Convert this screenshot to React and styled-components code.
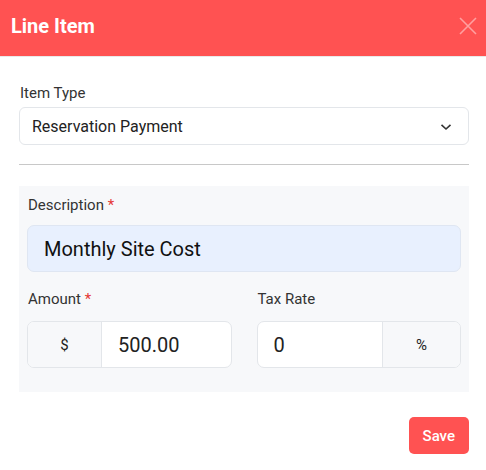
import React from "react";
import styled, { createGlobalStyle } from "styled-components";

const GlobalStyle = createGlobalStyle`
  * { box-sizing: border-box; }
  body {
    margin: 0;
    background: #fff;
    font-family: Roboto, "Liberation Sans", Arial, sans-serif;
    color: #212529;
  }
`;

export default function App() {
  return (
    <>
      <GlobalStyle />
      <Modal>
        <Header>
          <h2>Line Item</h2>
          <CloseButton aria-label="close">
            <svg width="18" height="18" viewBox="0 0 18 18">
              <path d="M1 1L17 17M17 1L1 17" stroke="currentColor" strokeWidth="1.6" />
            </svg>
          </CloseButton>
        </Header>
        <Body>
          <Field>
            <Label>Item Type</Label>
            <Select>
              <span>Reservation Payment</span>
              <svg width="12" height="8" viewBox="0 0 12 8">
                <path d="M1.5 1.8L6 6L10.5 1.8" fill="none" stroke="#333" strokeWidth="1.6" />
              </svg>
            </Select>
          </Field>
          <Divider />
          <Panel>
            <Field>
              <Label $gap={11}>
                Description <Req>*</Req>
              </Label>
              <BigInput $autofill>Monthly Site Cost</BigInput>
            </Field>
            <Row>
              <Field>
                <Label $gap={13}>
                  Amount <Req>*</Req>
                </Label>
                <Group>
                  <Addon $side="left" $w={74}>$</Addon>
                  <GroupInput>500.00</GroupInput>
                </Group>
              </Field>
              <Field>
                <Label $gap={13}>Tax Rate</Label>
                <Group>
                  <GroupInput>0</GroupInput>
                  <Addon $side="right" $w={78}>%</Addon>
                </Group>
              </Field>
            </Row>
          </Panel>
          <Footer>
            <SaveButton>Save</SaveButton>
          </Footer>
        </Body>
      </Modal>
    </>
  );
}

const Modal = styled.div`
  width: 486px;
  height: 470px;
  background: #fff;
`;

const Header = styled.div`
  height: 57px;
  background: #ff5252;
  display: flex;
  align-items: center;
  justify-content: space-between;
  padding: 0 9px 0 11px;
  border-bottom: 1px solid #e9e9e9;
  h2 {
    margin: 0;
    color: #fff;
    font-size: 20px;
    font-weight: 700;
    padding-bottom: 4px;
  }
`;

const CloseButton = styled.button`
  background: none;
  border: none;
  padding: 0;
  color: rgba(255, 255, 255, 0.45);
  display: flex;
  margin-bottom: 4px;
`;

const Body = styled.div`
  padding: 27px 17px 0 19px;
`;

const Field = styled.div`
  display: flex;
  flex-direction: column;
  flex: 1;
`;

const Label = styled.label`
  font-size: 15px;
  color: #333;
  line-height: 18px;
  margin-bottom: ${(p) => p.$gap || 5}px;
  margin-left: 1px;
`;

const Req = styled.span`
  color: #e53935;
`;

const Select = styled.div`
  height: 38px;
  border: 1px solid #e3e6ea;
  border-radius: 6px;
  display: flex;
  align-items: center;
  justify-content: space-between;
  padding: 0 16px 0 12px;
  font-size: 16px;
  color: #222;
  svg {
    margin-top: 1px;
  }
`;

const Divider = styled.hr`
  border: none;
  border-top: 1px solid #c8c8c8;
  margin: 19px 0 21px;
`;

const Panel = styled.div`
  background: #f7f8fa;
  padding: 10px 8px 24px 8px;
  display: flex;
  flex-direction: column;
  gap: 18px;
`;

const BigInput = styled.div`
  height: 47px;
  border-radius: 7px;
  border: 1px solid #dfe6f2;
  background: ${(p) => (p.$autofill ? "#e8f0fe" : "#fff")};
  display: flex;
  align-items: center;
  padding: 0 16px;
  font-size: 20px;
  color: #111;
`;

const Row = styled.div`
  display: flex;
  gap: 25px;
`;

const Group = styled.div`
  height: 47px;
  display: flex;
  border: 1px solid #e3e6ea;
  border-radius: 7px;
  overflow: hidden;
  background: #fff;
`;

const Addon = styled.div`
  width: ${(p) => p.$w}px;
  flex-shrink: 0;
  display: flex;
  align-items: center;
  justify-content: center;
  background: #f7f8fa;
  font-size: 15px;
  color: #222;
  ${(p) =>
    p.$side === "left"
      ? "border-right: 1px solid #e3e6ea;"
      : "border-left: 1px solid #e3e6ea;"}
`;

const GroupInput = styled.div`
  flex: 1;
  display: flex;
  align-items: center;
  padding: 0 16px;
  font-size: 20px;
  color: #222;
`;

const Footer = styled.div`
  display: flex;
  justify-content: flex-end;
  padding-top: 25px;
`;

const SaveButton = styled.button`
  height: 37px;
  padding: 0 14px;
  background: #ff5252;
  color: #fff;
  border: none;
  border-radius: 5px;
  font-family: Roboto, "Liberation Sans", Arial, sans-serif;
  font-size: 15px;
  font-weight: 500;
`;
